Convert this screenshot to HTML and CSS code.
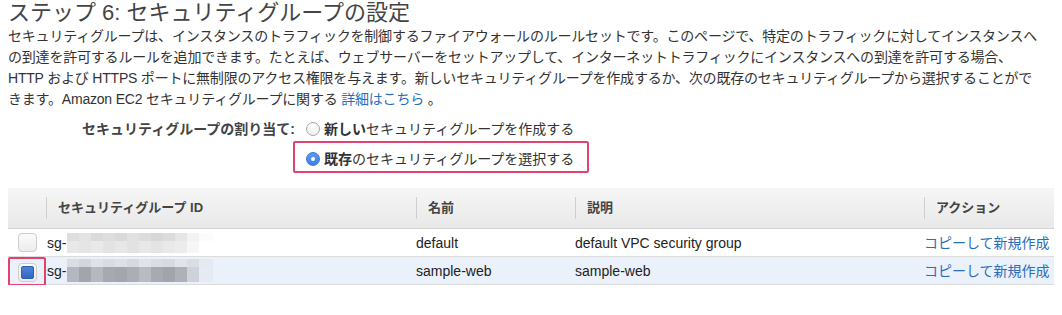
FILE: index.html
```html
<!DOCTYPE html>
<html lang="ja">
<head>
<meta charset="utf-8">
<title>ステップ 6: セキュリティグループの設定</title>
<link rel="stylesheet" href="styles.css">
</head>
<body>
<h1 class="title">ステップ 6: セキュリティグループの設定</h1>
<p class="intro">セキュリティグループは、インスタンスのトラフィックを制御するファイアウォールのルールセットです。このページで、特定のトラフィックに対してインスタンスへ<br>の到達を許可するルールを追加できます。たとえば、ウェブサーバーをセットアップして、インターネットトラフィックにインスタンスへの到達を許可する場合、<br>HTTP および HTTPS ポートに無制限のアクセス権限を与えます。新しいセキュリティグループを作成するか、次の既存のセキュリティグループから選択することがで<br>きます。Amazon EC2 セキュリティグループに関する <a class="link" href="#">詳細はこちら</a> 。</p>

<div class="assign">
  <div class="assign-label">セキュリティグループの割り当て:</div>
  <label class="option"><span class="radio"></span><span><b>新しい</b>セキュリティグループを作成する</span></label>
  <div></div>
  <div class="highlight">
    <label class="option"><span class="radio checked"></span><span><b>既存</b>のセキュリティグループを選択する</span></label>
  </div>
</div>

<table class="sg-table">
  <thead>
    <tr>
      <th class="col-check"></th>
      <th class="col-id"><span class="th-inner">セキュリティグループ ID</span></th>
      <th class="col-name"><span class="th-inner">名前</span></th>
      <th class="col-desc"><span class="th-inner">説明</span></th>
      <th class="col-act"><span class="th-inner">アクション</span></th>
    </tr>
  </thead>
  <tbody>
    <tr>
      <td class="col-check"><span class="checkbox"></span></td>
      <td class="col-id"><span class="sg">sg-</span><span class="mosaic"><span class="strip s1"></span><span class="strip s2"></span></span></td>
      <td>default</td>
      <td>default VPC security group</td>
      <td><a class="link" href="#">コピーして新規作成</a></td>
    </tr>
    <tr class="selected">
      <td class="col-check"><span class="check-frame"><span class="checkbox checked"></span></span></td>
      <td class="col-id"><span class="sg">sg-</span><span class="mosaic"><span class="strip s3"></span><span class="strip s4"></span></span></td>
      <td>sample-web</td>
      <td>sample-web</td>
      <td><a class="link" href="#">コピーして新規作成</a></td>
    </tr>
  </tbody>
</table>
</body>
</html>
```

FILE: styles.css
```css
html, body {
  background: #fff;
}
body {
  margin: 0 8px;
  font-family: "Liberation Sans", "Noto Sans CJK JP", sans-serif;
  color: #333;
}
.title {
  margin: 0;
  font-size: 22px;
  font-weight: normal;
  line-height: 26px;
  color: #444;
}
.intro {
  margin: 0;
  font-size: 14px;
  line-height: 21px;
  letter-spacing: -0.2px;
  white-space: nowrap;
  color: #333;
}
.link {
  color: #2a6ebb;
  text-decoration: none;
}
.assign {
  display: grid;
  grid-template-columns: 287px auto;
  justify-content: start;
  column-gap: 11px;
  margin-top: 9px;
  font-size: 14px;
  line-height: 20px;
}
.assign-label {
  text-align: right;
  font-weight: bold;
  color: #444;
}
.option {
  display: flex;
  align-items: center;
  gap: 4px;
  color: #333;
}
.radio {
  width: 12px;
  height: 12px;
  border-radius: 50%;
  border: 1px solid #a6a6a6;
  background: linear-gradient(#fff, #f0f0f0);
  flex: none;
  position: relative;
}
.radio.checked {
  background: linear-gradient(#5b9bf5, #3d80e8);
  border-color: #3b78d8;
}
.radio.checked::after {
  content: "";
  position: absolute;
  left: 4px;
  top: 4px;
  width: 4px;
  height: 4px;
  border-radius: 50%;
  background: #fff;
}
.highlight {
  margin-top: 2px;
  margin-left: -13px;
  width: 296px;
  box-sizing: border-box;
  border: 2px solid #e3416e;
  border-radius: 2px;
  padding: 6px 0 2px 11px;
}
.sg-table {
  margin-top: 15px;
  width: 1046px;
  border-collapse: collapse;
  font-size: 14px;
  color: #222;
}
.sg-table thead tr {
  background: linear-gradient(#f6f6f6, #e8e8e8);
}
.sg-table th {
  height: 40px;
  padding: 0;
  text-align: left;
  font-size: 13px;
  font-weight: bold;
  color: #444;
  border-bottom: 1px solid #d3d3d3;
  vertical-align: middle;
}
.th-inner {
  display: block;
  border-left: 1px solid #cfcfcf;
  padding-left: 11px;
  line-height: 22px;
}
.col-check { width: 38px; }
.col-id { width: 369px; }
.sg-table th:nth-child(3) { width: 159px; }
.sg-table th:nth-child(4) { width: 349px; }
.sg-table td {
  height: 27px;
  padding: 0;
  border-bottom: 1px solid #dcdcdc;
  vertical-align: middle;
  line-height: 20px;
  white-space: nowrap;
}
.sg-table tr.selected td {
  background: #eaf1fb;
}
.sg-table td.col-id {
  padding-left: 1px;
}
.checkbox {
  display: block;
  margin-left: 10px;
  width: 17px;
  height: 17px;
  border: 1px solid #cdcdcd;
  border-radius: 4px;
  background: linear-gradient(#fbfbfb, #ececec);
  position: relative;
}
.checkbox.checked::after {
  content: "";
  position: absolute;
  left: 2px;
  top: 2px;
  width: 11px;
  height: 11px;
  border: 1px solid #2f5fae;
  border-radius: 2px;
  background: linear-gradient(#4a84d8, #3568bf);
}
.check-frame {
  display: block;
  width: 38px;
  height: 29px;
  margin: 0 0 -2px;
  padding-top: 4px;
  border: 2px solid #e3416e;
  border-radius: 2px;
  box-sizing: border-box;
  position: relative;
  z-index: 1;
}
.check-frame .checkbox {
  margin-left: 8px;
}
.sg {
  vertical-align: middle;
}
.mosaic {
  display: inline-flex;
  flex-direction: column;
  vertical-align: middle;
  width: 146px;
  margin-left: 1px;
}
.strip {
  display: block;
  width: 146px;
}
.s1 {
  height: 8px;
  background: linear-gradient(to right,
    #dedede 0 12px, #e3e3e3 12px 24px, #dadada 24px 36px, #dedede 36px 48px,
    #d9d9d9 48px 60px, #e1e1e1 60px 72px, #dcdcdc 72px 84px, #d7d7d7 84px 96px,
    #dcdcdc 96px 108px, #e6e6e6 108px 120px, #f3f3f3 120px 132px, #fbfbfb 132px 146px);
}
.s2 {
  height: 12px;
  background: linear-gradient(to right,
    #e8e8e8 0 12px, #e5e5e5 12px 24px, #e9e9e9 24px 36px, #e3e3e3 36px 48px,
    #e7e7e7 48px 60px, #e2e2e2 60px 72px, #e8e8e8 72px 84px, #e4e4e4 84px 96px,
    #e9e9e9 96px 108px, #ececec 108px 120px, #f6f6f6 120px 132px, #ffffff 132px 146px);
}
.s3 {
  height: 8px;
  background: linear-gradient(to right,
    #dadde4 0 12px, #d3d6dd 12px 24px, #dfe2e9 24px 36px, #d9dce3 36px 48px,
    #dde0e7 48px 60px, #d6d9e0 60px 72px, #e0e3ea 72px 84px, #dadde4 84px 96px,
    #d7dae1 96px 108px, #e1e4eb 108px 120px, #d9dde4 120px 132px, #e5e9f1 132px 146px);
}
.s4 {
  height: 15px;
  background: linear-gradient(to right,
    #b4b7bd 0 12px, #a2a5ab 12px 24px, #b5b8be 24px 36px, #a6a9af 36px 48px,
    #a3a6ac 48px 60px, #abaeb4 60px 72px, #b8bbc1 72px 84px, #a7aab0 84px 96px,
    #a1a4aa 96px 108px, #aeb1b7 108px 120px, #cfd2d8 120px 132px, #e6eaf2 132px 146px);
}
```
